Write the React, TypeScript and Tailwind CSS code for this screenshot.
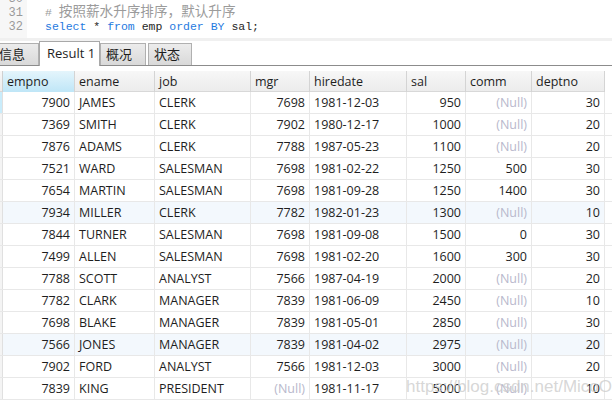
import React from "react";

type Row = [number, string, string, number | null, string, number, number | null, number];

const rows: Row[] = [
  [7900, "JAMES", "CLERK", 7698, "1981-12-03", 950, null, 30],
  [7369, "SMITH", "CLERK", 7902, "1980-12-17", 1000, null, 20],
  [7876, "ADAMS", "CLERK", 7788, "1987-05-23", 1100, null, 20],
  [7521, "WARD", "SALESMAN", 7698, "1981-02-22", 1250, 500, 30],
  [7654, "MARTIN", "SALESMAN", 7698, "1981-09-28", 1250, 1400, 30],
  [7934, "MILLER", "CLERK", 7782, "1982-01-23", 1300, null, 10],
  [7844, "TURNER", "SALESMAN", 7698, "1981-09-08", 1500, 0, 30],
  [7499, "ALLEN", "SALESMAN", 7698, "1981-02-20", 1600, 300, 30],
  [7788, "SCOTT", "ANALYST", 7566, "1987-04-19", 2000, null, 20],
  [7782, "CLARK", "MANAGER", 7839, "1981-06-09", 2450, null, 10],
  [7698, "BLAKE", "MANAGER", 7839, "1981-05-01", 2850, null, 30],
  [7566, "JONES", "MANAGER", 7839, "1981-04-02", 2975, null, 20],
  [7902, "FORD", "ANALYST", 7566, "1981-12-03", 3000, null, 20],
  [7839, "KING", "PRESIDENT", null, "1981-11-17", 5000, null, 10],
];

const headers = ["empno", "ename", "job", "mgr", "hiredate", "sal", "comm", "deptno"];
const numeric = [true, false, false, true, false, true, true, true];

const grid =
  "grid grid-cols-[3px_72px_80px_96px_59px_97px_59px_66px_73px_1fr]";

const Cell = ({ v, num }: { v: string | number | null; num: boolean }) => (
  <div
    className={`border-r border-[#e8e8e8] px-[4px] pt-[2px] flex items-center whitespace-nowrap overflow-hidden ${
      num ? "justify-end" : "justify-start"
    }`}
  >
    {v === null ? <span className="text-[#b8b8cc]">(Null)</span> : v}
  </div>
);

// inactive tab
const Tab = ({ label, w }: { label: string; w: string }) => (
  <div
    className={`${w} h-[22px] pl-[5px] flex items-center bg-gradient-to-b from-[#ececec] to-[#d9d9d9] border border-[#b0b0b0] border-b-0 text-[13px]`}
  >
    {label}
  </div>
);

export default function App() {
  return (
    <div
      className="relative w-[612px] h-[403px] overflow-hidden bg-white text-[#1e1e1e]"
      style={{ fontFamily: '"Open Sans", "Noto Sans CJK SC", sans-serif' }}
    >
      {/* editor */}
      <div className="h-[38px] overflow-hidden flex">
        <div className="w-[27px] bg-[#f7f7f7] flex flex-col items-end pr-[4px] -mt-[8px] text-[#9a9a9a] font-['Liberation_Mono',monospace] text-[12px] leading-[14px]">
          <span>30</span>
          <span>31</span>
          <span>32</span>
        </div>
        <div className="flex flex-col pl-[18px] -mt-[8px] font-['Liberation_Mono','Noto_Sans_CJK_SC',monospace] text-[11.5px] leading-[14px] whitespace-pre">
          <span>&nbsp;</span>
          <span className="text-[#9b9b9b]">
            # <span className="text-[13.6px]">按照薪水升序排序，默认升序</span>
          </span>
          <span>
            <span className="text-[#1f7ae0]">select</span> * <span className="text-[#1f7ae0]">from</span> emp{" "}
            <span className="text-[#1f7ae0]">order BY</span> sal;
          </span>
        </div>
      </div>
      <div className="h-[3px] bg-[#f0f0f0]" />

      {/* tabs */}
      <div className="h-[25px] flex items-end border-b border-[#8c8c8c]">
        <div className="h-[22px] w-[39px] flex items-center -indent-[1px] bg-gradient-to-b from-[#ececec] to-[#d9d9d9] border-r border-t border-[#b0b0b0] text-[13px]">
          信息
        </div>
        <div className="w-[61px] h-[25px] -mb-px pl-[7px] flex items-center bg-white border border-b-0 border-[#a8a8a8] text-[13px]">
          Result 1
        </div>
        <Tab label="概况" w="w-[46px]" />
        <div className="w-[2px]" />
        <Tab label="状态" w="w-[44px]" />
      </div>

      {/* table */}
      <div className="mt-[5px] text-[12.5px]">
        <div className={`${grid} h-[21px] border-b border-[#d8d8d8] bg-gradient-to-b from-[#f7f7f7] to-[#ececec]`}>
          <div className="border-r border-[#d0d0d0]" />
          {headers.map((h, i) => (
            <div
              key={h}
              className={`border-r border-[#d4d4d4] px-[4px] pt-[2px] flex items-center ${
                i === 0 ? "bg-gradient-to-b from-[#e4f5fc] to-[#bfe6f7]" : ""
              }`}
            >
              {h}
            </div>
          ))}
          <div className="bg-white" />
        </div>
        {rows.map((r, ri) => (
          <div
            key={ri}
            className={`${grid} h-[22px] border-b border-[#e8e8e8] ${
              ri === 5 || ri === 11 ? "bg-[#f3f8fd]" : "bg-white"
            }`}
          >
            <div className={`border-r border-[#e0e0e0] ${ri === 0 ? "bg-[#c9ecfb]" : "bg-[#f4f4f4]"}`} />
            {r.map((v, ci) => (
              <Cell key={ci} v={v} num={numeric[ci]} />
            ))}
            <div className="bg-white" />
          </div>
        ))}
      </div>

      {/* watermark */}
      <div className="absolute left-[406px] top-[378px] leading-none text-[17px] text-[#cdcdcd]/80 font-['Liberation_Sans',sans-serif] whitespace-nowrap pointer-events-none">
        https://blog.csdn.net/MicoOu
      </div>
    </div>
  );
}
